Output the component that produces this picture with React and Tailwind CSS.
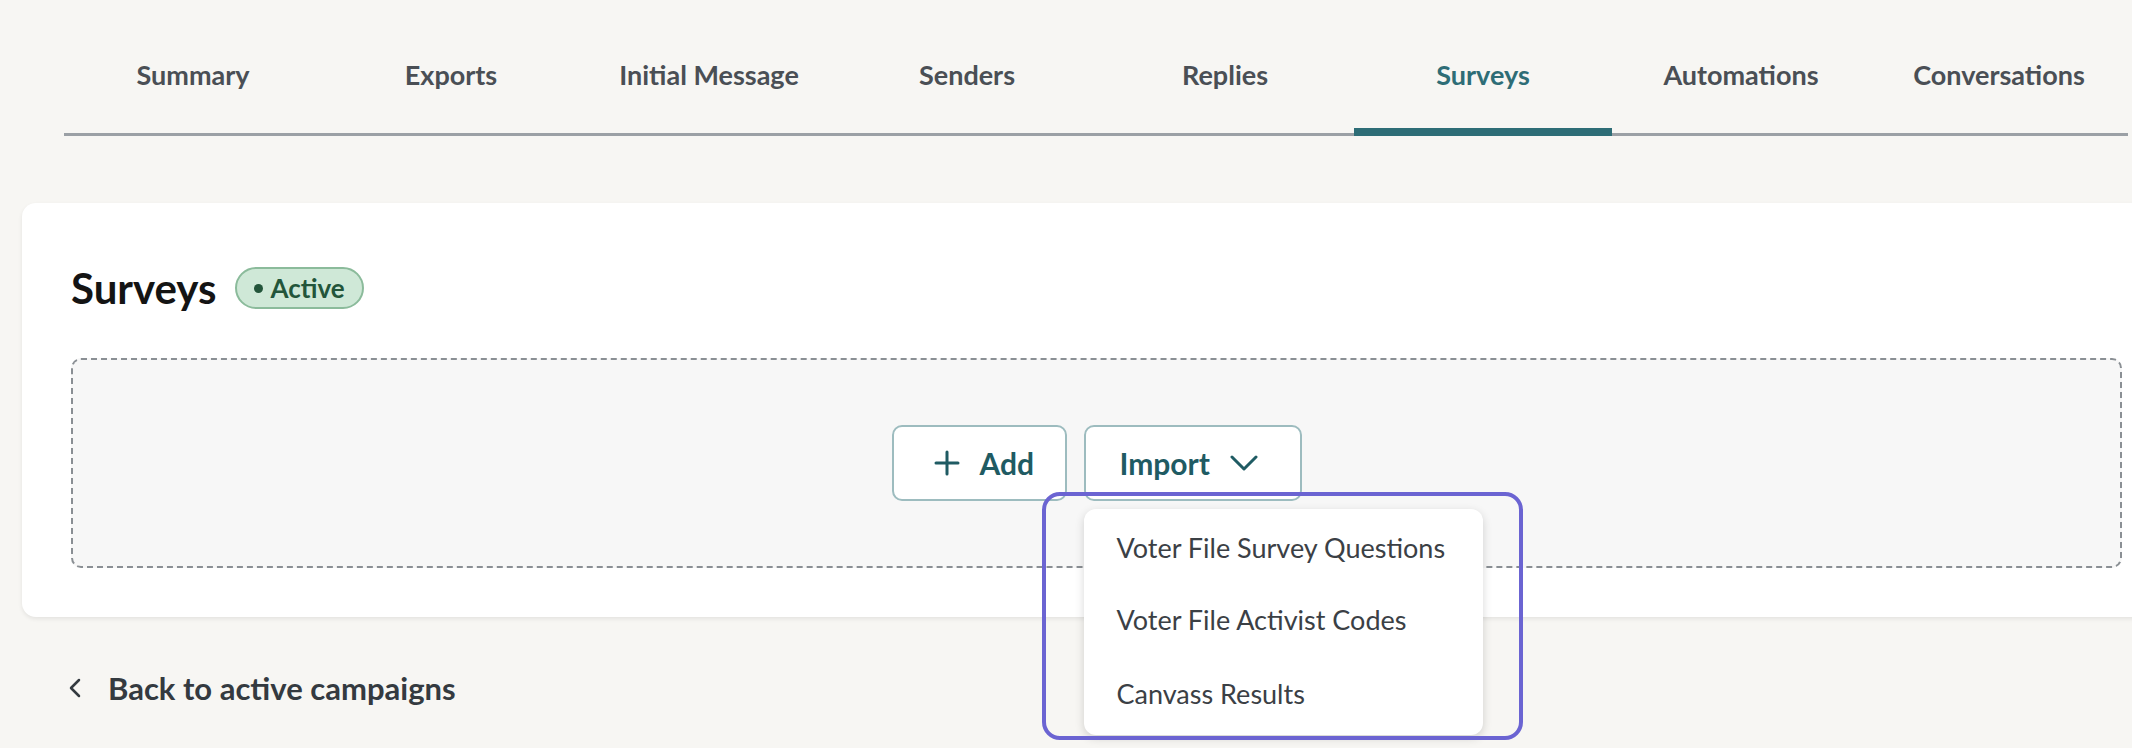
import { useState } from "react";

const tabs = [
  "Summary",
  "Exports",
  "Initial Message",
  "Senders",
  "Replies",
  "Surveys",
  "Automations",
  "Conversations",
];

const importOptions = [
  "Voter File Survey Questions",
  "Voter File Activist Codes",
  "Canvass Results",
];

function PlusIcon() {
  return (
    <svg width="26" height="26" viewBox="0 0 26 26" fill="none" stroke="currentColor" strokeWidth="3" strokeLinecap="round">
      <path d="M13 2v22M2 13h22" />
    </svg>
  );
}

function ChevronDown() {
  return (
    <svg width="28" height="16" viewBox="0 0 28 16" fill="none" stroke="currentColor" strokeWidth="3" strokeLinecap="round" strokeLinejoin="round">
      <path d="M2 2l12 12L26 2" />
    </svg>
  );
}

function ChevronLeft() {
  return (
    <svg width="12" height="20" viewBox="0 0 12 20" fill="none" stroke="currentColor" strokeWidth="2.5" strokeLinecap="round" strokeLinejoin="round">
      <path d="M10 2L2 10l8 8" />
    </svg>
  );
}

export default function App() {
  const [active, setActive] = useState("Surveys");
  const [open, setOpen] = useState(true);

  return (
    <main className="min-h-screen w-full overflow-hidden bg-[#f7f6f3] font-['Lato','Noto_Sans',sans-serif]">
      {/* Tabs */}
      <nav className="ml-[64px] flex w-[2064px] items-end">
        {tabs.map((t) => (
          <button
            key={t}
            onClick={() => setActive(t)}
            className={
              t === active
                ? "flex h-[136px] w-[258px] items-center justify-center border-b-[8px] border-[#2e6d76] pt-[22px] text-[27px] font-bold text-[#2e6d76]"
                : "flex h-[136px] w-[258px] items-center justify-center border-b-[3px] border-[#9ba0a5] pb-[5px] pt-[22px] text-[27px] font-bold text-[#4a4f55]"
            }
          >
            {t}
          </button>
        ))}
      </nav>

      {/* Surveys card */}
      <section className="ml-[22px] mt-[67px] w-[2149px] rounded-[14px] bg-white px-[49px] pb-[49px] pt-[57px] shadow-[0_2px_4px_rgba(0,0,0,0.08)]">
        <div className="flex h-[56px] items-center gap-[18px]">
          <h2 className="text-[42px] font-bold text-[#141414]">Surveys</h2>
          <span className="flex h-[42px] items-center gap-[8px] rounded-full border-2 border-[#8bbb9b] bg-[#cfe8d7] px-[17px] text-[26px] font-bold text-[#23553a]">
            <span className="h-[9px] w-[9px] rounded-full bg-[#23553a]" />
            Active
          </span>
        </div>

        <div className="mt-[42px] flex h-[210px] items-center justify-center gap-[17px] rounded-[10px] border-2 border-dashed border-[#8a8f94] bg-[#f7f7f7]">
          <button className="flex h-[76px] w-[175px] items-center gap-[20px] rounded-[10px] border-2 border-[#9dbcbf] bg-white pl-[40px] text-[30px] font-bold text-[#1f5b63]">
            <PlusIcon />
            Add
          </button>

          <div className="relative">
            <button
              onClick={() => setOpen(!open)}
              className="flex h-[76px] w-[218px] items-center gap-[20px] rounded-[10px] border-2 border-[#9dbcbf] bg-white pl-[34px] text-[30px] font-bold text-[#1f5b63]"
            >
              Import
              <ChevronDown />
            </button>

            {open && (
              <>
                <div className="absolute left-0 top-[84px] z-10 w-[399px] rounded-[12px] bg-white pb-[3px] pt-[3px] shadow-[0_3px_10px_rgba(0,0,0,0.16)]">
                  {importOptions.map((o, i) => (
                    <div
                      key={o}
                      className={
                        i === 2
                          ? "flex h-[76px] items-center pl-[33px] text-[27px] text-[#3b4045]"
                          : "flex h-[72px] items-center pl-[33px] text-[27px] text-[#3b4045]"
                      }
                    >
                      {o}
                    </div>
                  ))}
                </div>
                {/* focus ring round the open menu */}
                <div className="pointer-events-none absolute left-[-42px] top-[67px] z-20 h-[248px] w-[481px] rounded-[18px] border-[4px] border-[#6b64d2]" />
              </>
            )}
          </div>
        </div>
      </section>

      {/* Back link */}
      <a href="#" className="ml-[69px] mt-[48px] flex w-fit items-center gap-[27px] text-[31px] font-bold text-[#343a40]">
        <ChevronLeft />
        Back to active campaigns
      </a>
    </main>
  );
}
